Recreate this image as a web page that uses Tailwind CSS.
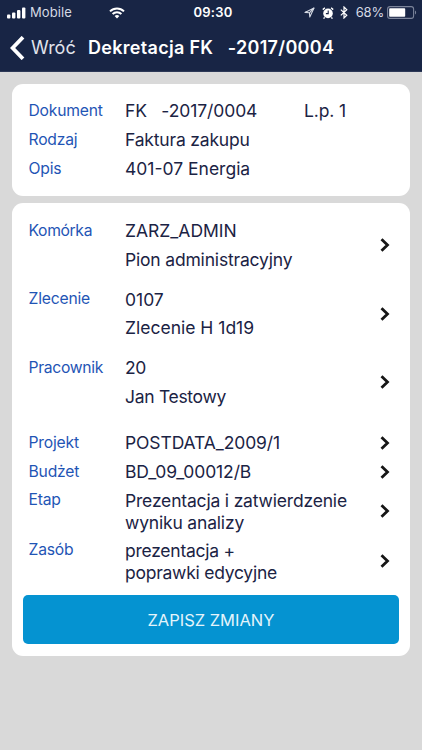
<!DOCTYPE html>
<html lang="pl">
<head>
  <meta charset="UTF-8" />
  <meta name="viewport" content="width=device-width, initial-scale=1.0"/>
  <title>Dekretacja FK</title>
  <script src="https://cdn.jsdelivr.net/npm/@tailwindcss/browser@4"></script>
</head>
<body class="bg-[#d9d9d9] h-[750px] overflow-hidden font-['Inter',sans-serif] text-[#1b2344]">
  <header class="h-[72px] bg-[#182545] text-white border-b border-[#2c3856]">
    <!-- status bar -->
    <div class="h-6 grid grid-cols-3 items-center pt-px pl-[7px] pr-[5px] text-[13px] text-[#d5dae4]">
      <div class="flex items-center">
        <svg class="w-[19px] h-[12px] mr-1" viewBox="0 0 19 12" fill="#fff">
          <rect x="0" y="7.5" width="3.4" height="4" rx="1"/>
          <rect x="5" y="5.5" width="3.4" height="6" rx="1"/>
          <rect x="10" y="3" width="3.4" height="8.5" rx="1"/>
          <rect x="15" y="0.5" width="3.4" height="11" rx="1"/>
        </svg>
        <span class="tracking-[0.1px]">Mobile</span>
        <svg class="w-4 h-3 ml-[37px]" viewBox="0 0 16 12" fill="none" stroke="#fff" stroke-width="2">
          <path d="M1 4.4a10 10 0 0 1 14 0"/>
          <path d="M3.6 7a6.2 6.2 0 0 1 8.8 0"/>
          <path d="M8 11.5L5.6 9.1a3.4 3.4 0 0 1 4.8 0z" fill="#fff" stroke="none"/>
        </svg>
      </div>
      <div class="text-center font-semibold text-white tracking-[0.2px] pl-[2px]">09:30</div>
      <div class="flex items-center justify-end">
        <svg class="w-[11px] h-[11px] mr-[7px]" viewBox="0 0 11 11" fill="none" stroke="#d5dae4" stroke-width="1.1" stroke-linejoin="round">
          <path d="M10 1L1 5.4l4.4.4L5.800 10z"/>
          <path d="M10 1L5.400 5.800"/>
        </svg>
        <svg class="w-[12px] h-[12px] mr-[6px]" viewBox="0 0 12 12" fill="#fff">
          <circle cx="6" cy="6.4" r="4.8"/>
          <path d="M.8 2.6L2.9.8M11.2 2.6L9.1.8M2.6 10.4l-1 1.2M9.4 10.4l1 1.2" stroke="#fff" stroke-width="1.4"/>
          <path d="M6.2 3.6v3H3.9" fill="none" stroke="#182545" stroke-width="1.1"/>
        </svg>
        <svg class="w-[8px] h-[13px] mr-[8px]" viewBox="0 0 8 13" fill="none" stroke="#fff" stroke-width="1.2">
          <path d="M.8 3.6l6 5.6L4 12V1l2.8 2.8-6 5.6"/>
        </svg>
        <span class="tracking-[-0.2px] mr-[3px]">68%</span>
        <svg class="w-[30px] h-[13px]" viewBox="0 0 30 13">
          <rect x="0.6" y="0.6" width="26" height="11.8" rx="2.4" fill="none" stroke="#7b849a" stroke-width="1.1"/>
          <rect x="2.2" y="2.2" width="16" height="8.6" rx="0.8" fill="#fff"/>
          <path d="M28 4.5v4c1.5-.5 1.5-3.5 0-4z" fill="#7b849a"/>
        </svg>
      </div>
    </div>
    <!-- navigation bar -->
    <div class="h-12 flex items-center pl-[10px]">
      <svg class="w-[15px] h-[24px]" viewBox="0 0 15 24" fill="none" stroke="#fff" stroke-width="3.8">
        <path d="M13 1.2L2.6 12 13 22.8"/>
      </svg>
      <span class="ml-[6px] w-[57px] text-[18px] leading-[22px] text-[#e0e4ec]">Wróć</span>
      <h1 class="text-[18px] leading-[22px] tracking-[0.3px] font-semibold whitespace-pre">Dekretacja FK   -2017/0004</h1>
    </div>
  </header>

  <main class="px-3 pt-[11.5px] text-[17.5px] leading-[22px] tracking-[-0.1px]">
    <section class="bg-white rounded-[11px] h-[112.5px] pt-[13.5px] pl-[16.5px]">
      <div class="flex h-[28.7px] items-center">
        <span class="w-[96.5px] text-[15.7px] tracking-[-0.2px] text-[#1f55b5]">Dokument</span>
        <span class="w-[179px] whitespace-pre">FK   -2017/0004</span>
        <span>L.p. 1</span>
      </div>
      <div class="flex h-[28.7px] items-center">
        <span class="w-[96.5px] text-[15.7px] tracking-[-0.2px] text-[#1f55b5]">Rodzaj</span>
        <span class="tracking-[-0.18px]">Faktura zakupu</span>
      </div>
      <div class="flex h-[28.7px] items-center">
        <span class="w-[96.5px] text-[15.7px] tracking-[-0.2px] text-[#1f55b5]">Opis</span>
        <span class="tracking-normal">401-07 Energia</span>
      </div>
    </section>

    <section class="mt-[7px] bg-white rounded-[11px] h-[453px] pt-[13.5px]">
      <div class="flex items-center h-[57.5px] mb-[11px] pl-[16.5px] pr-[20px]">
        <span class="self-start pt-[3px] w-[96.5px] text-[15.7px] tracking-[-0.35px] text-[#1f55b5]">Komórka</span>
        <div class="flex-1 pt-px leading-[28.7px] tracking-[-0.18px]"><span class="tracking-normal">ZARZ_ADMIN</span><br>Pion administracyjny</div>
        <svg class="w-[10px] h-[14px]" viewBox="0 0 10 14" fill="none" stroke="#161616" stroke-width="2.8"><path d="M1.5 1.2L7.5 7l-6 5.8"/></svg>
      </div>
      <div class="flex items-center h-[57.5px] mb-[11px] pl-[16.5px] pr-[20px]">
        <span class="self-start pt-[3px] w-[96.5px] text-[15.7px] tracking-[-0.2px] text-[#1f55b5]">Zlecenie</span>
        <div class="flex-1 pt-px leading-[28.7px] tracking-normal">0107<br>Zlecenie H 1d19</div>
        <svg class="w-[10px] h-[14px]" viewBox="0 0 10 14" fill="none" stroke="#161616" stroke-width="2.8"><path d="M1.5 1.2L7.5 7l-6 5.8"/></svg>
      </div>
      <div class="flex items-center h-[57.5px] mb-[18px] pl-[16.5px] pr-[20px]">
        <span class="self-start pt-[3px] w-[96.5px] text-[15.7px] tracking-[-0.3px] text-[#1f55b5]">Pracownik</span>
        <div class="flex-1 pt-px leading-[28.7px] tracking-[-0.3px]">20<br>Jan Testowy</div>
        <svg class="w-[10px] h-[14px]" viewBox="0 0 10 14" fill="none" stroke="#161616" stroke-width="2.8"><path d="M1.5 1.2L7.5 7l-6 5.8"/></svg>
      </div>
      <div class="flex items-center h-[28.7px] pl-[16.5px] pr-[20px]">
        <span class="w-[96.5px] text-[15.7px] tracking-[-0.2px] text-[#1f55b5]">Projekt</span>
        <div class="flex-1">POSTDATA_2009/1</div>
        <svg class="w-[10px] h-[14px]" viewBox="0 0 10 14" fill="none" stroke="#161616" stroke-width="2.8"><path d="M1.5 1.2L7.5 7l-6 5.8"/></svg>
      </div>
      <div class="flex items-center h-[28.7px] pl-[16.5px] pr-[20px]">
        <span class="w-[96.5px] text-[15.7px] tracking-[-0.2px] text-[#1f55b5]">Budżet</span>
        <div class="flex-1">BD_09_00012/B</div>
        <svg class="w-[10px] h-[14px]" viewBox="0 0 10 14" fill="none" stroke="#161616" stroke-width="2.8"><path d="M1.5 1.2L7.5 7l-6 5.8"/></svg>
      </div>
      <div class="flex items-center h-[50px] pl-[16.5px] pr-[20px]">
        <span class="self-start pt-[3px] w-[96.5px] text-[15.7px] tracking-[-0.2px] text-[#1f55b5]">Etap</span>
        <div class="flex-1 pt-[1.5px] whitespace-nowrap tracking-[-0.18px]">Prezentacja i zatwierdzenie<br>wyniku analizy</div>
        <svg class="w-[10px] h-[14px]" viewBox="0 0 10 14" fill="none" stroke="#161616" stroke-width="2.8"><path d="M1.5 1.2L7.5 7l-6 5.8"/></svg>
      </div>
      <div class="flex items-center h-[50px] pl-[16.5px] pr-[20px]">
        <span class="self-start pt-[3px] w-[96.5px] text-[15.7px] tracking-[-0.2px] text-[#1f55b5]">Zasób</span>
        <div class="flex-1 pt-[1.5px] tracking-[-0.25px]">prezentacja +<br>poprawki edycyjne</div>
        <svg class="w-[10px] h-[14px]" viewBox="0 0 10 14" fill="none" stroke="#161616" stroke-width="2.8"><path d="M1.5 1.2L7.5 7l-6 5.8"/></svg>
      </div>
      <button class="block mt-[9px] ml-[10.7px] w-[376.5px] h-[49px] rounded-[5px] bg-[#0593d1] text-[#e4f4fb] text-[16.5px] tracking-normal">ZAPISZ ZMIANY</button>
    </section>
  </main>
</body>
</html>
